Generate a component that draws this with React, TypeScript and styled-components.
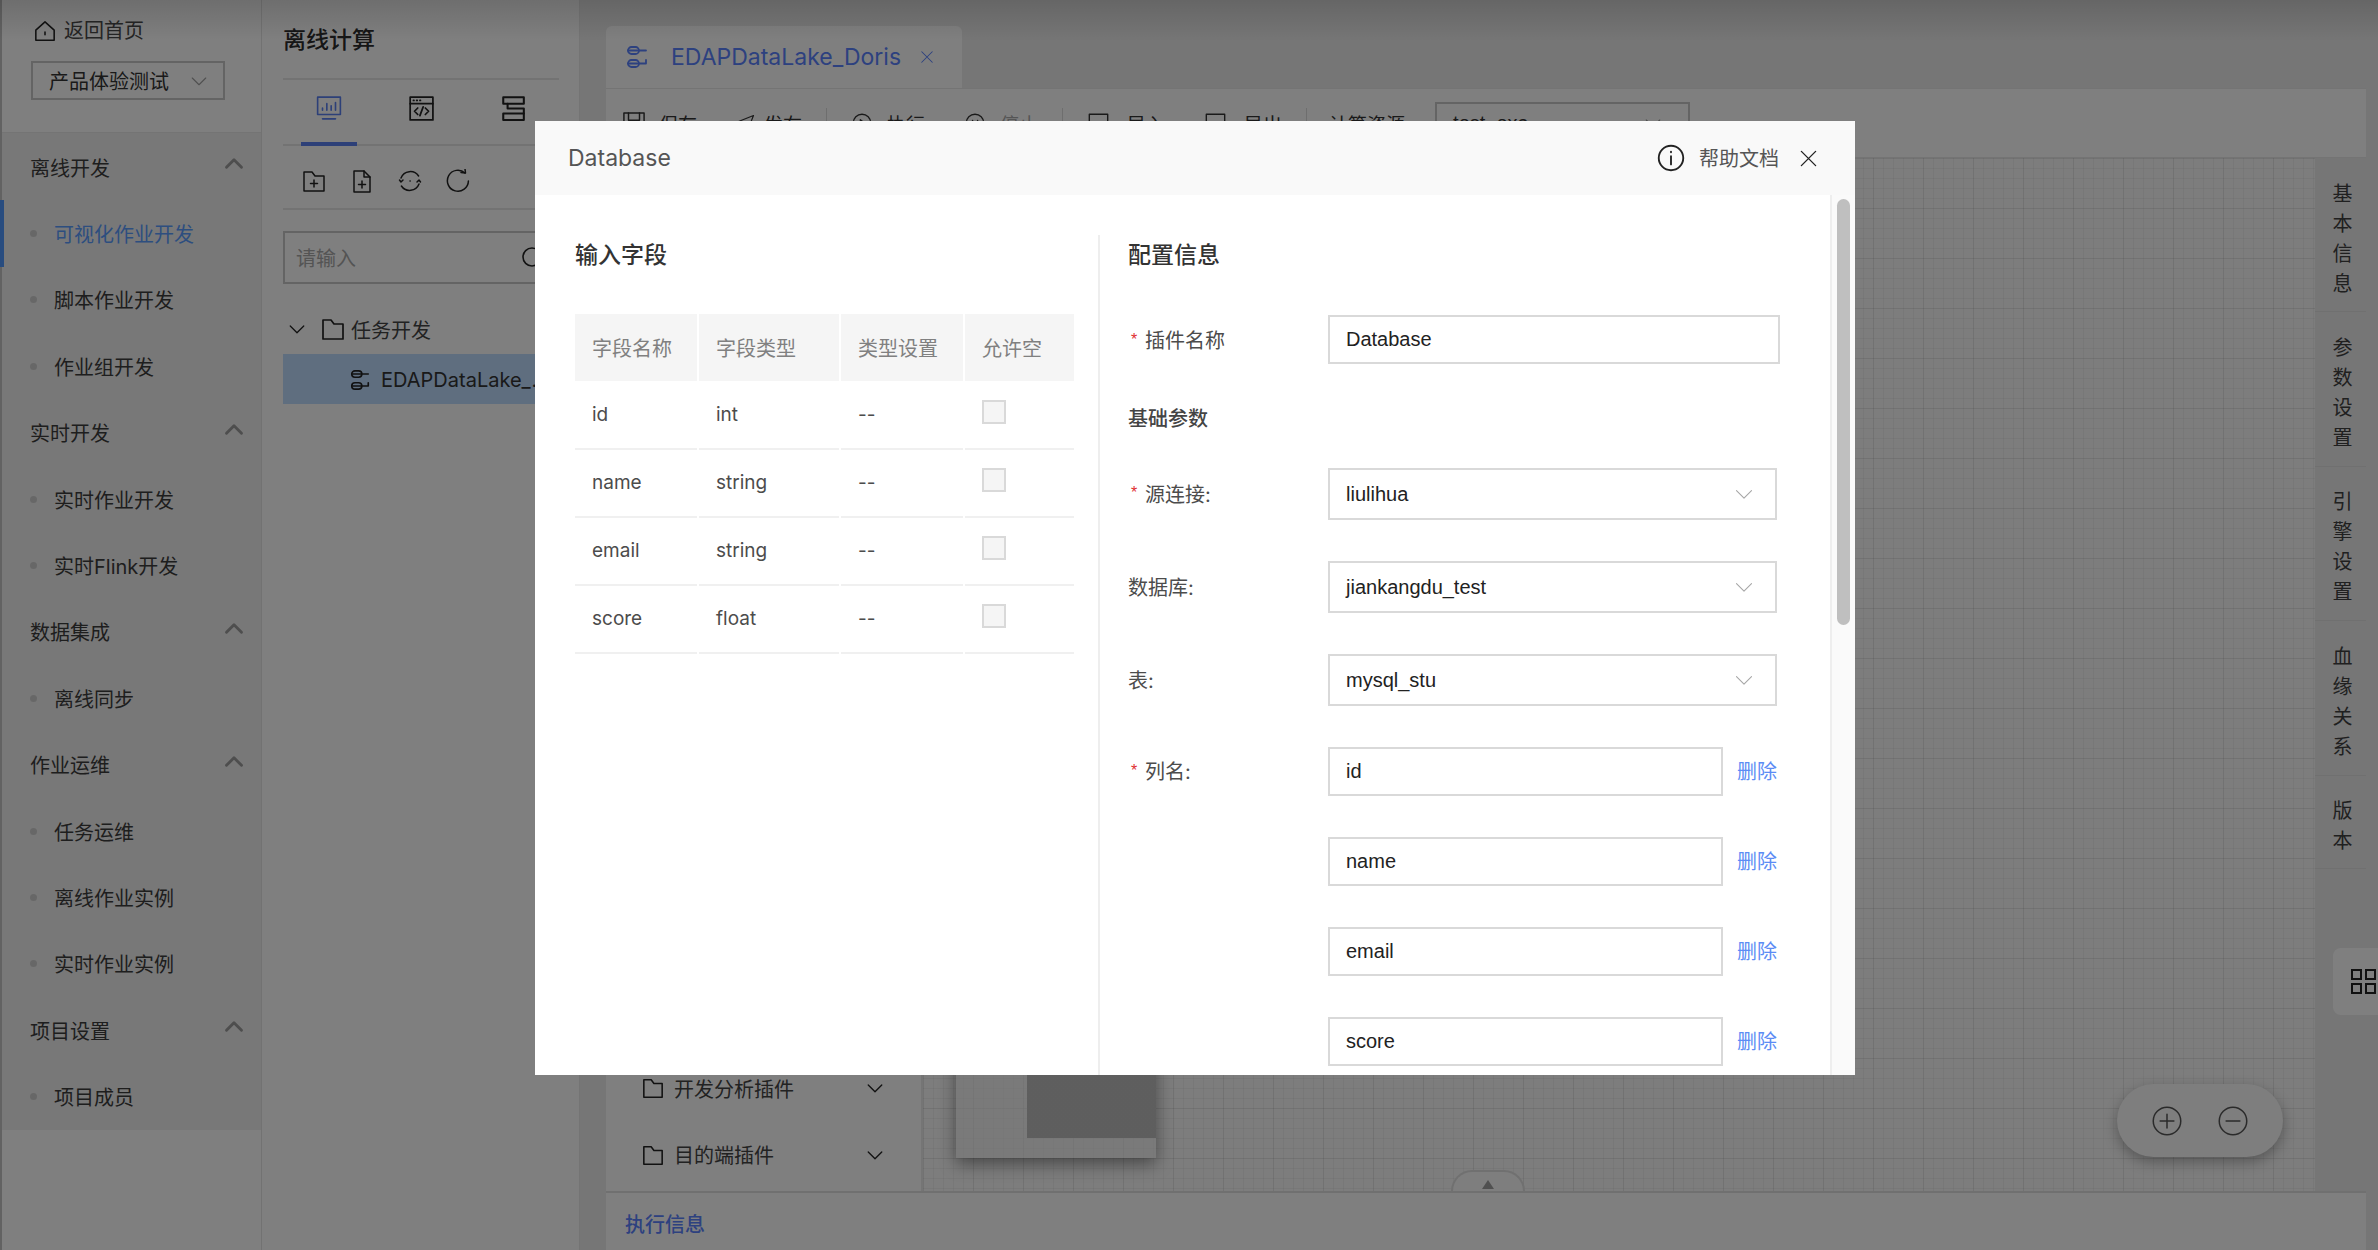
import React from "react";
import styled, { createGlobalStyle } from "styled-components";

const cjk = `"Noto Sans CJK SC", sans-serif`;

const Global = createGlobalStyle`
  html, body { margin: 0; padding: 0; width: 2378px; height: 1250px; overflow: hidden; background: #fff; }
  * { box-sizing: border-box; }
  body { font-family: Inter, ${cjk}; font-size: 20px; color: #505050; }
`;

const Page = styled.div`
  position: relative;
  display: flex;
  width: 2378px;
  height: 1250px;
  overflow: hidden;
`;

/* ---------- sidebar ---------- */
const Sidebar = styled.aside`
  width: 262px;
  flex: none;
  display: flex;
  flex-direction: column;
  background: #fff;
  border-left: 2px solid #c4c4c4;
  border-right: 1px solid #e4e4e4;
`;
const SideHeader = styled.div`
  height: 133px;
  flex: none;
  padding: 20px 0 0 29px;
  border-bottom: 1px solid #e8e8e8;
`;
const HomeLink = styled.div`
  display: flex;
  align-items: center;
  gap: 8px;
  height: 22px;
  padding-left: 3px;
  font-size: 20px;
  line-height: 22px;
  color: #4a4a4a;
  svg { color: #222; }
`;
const ProjectSelect = styled.div`
  display: flex;
  align-items: center;
  justify-content: space-between;
  width: 194px;
  height: 39px;
  margin-top: 19px;
  padding: 0 15px 0 16px;
  border: 2px solid #c8c8c8;
  color: #333;
  svg { color: #a0a0a0; }
`;
const Menu = styled.nav`
  background: #f0f0f0;
  padding-top: 1px;
`;
const GroupRow = styled.div`
  display: flex;
  align-items: center;
  justify-content: space-between;
  height: 66.4px;
  padding: 0 17px 0 28px;
  color: #3c3c3c;
  svg { color: #9c9c9c; margin-top: -6px; }
`;
const ItemRow = styled.div<{ $active?: boolean }>`
  display: flex;
  align-items: center;
  gap: 17px;
  height: 66.4px;
  margin-left: -2px;
  padding-left: 30px;
  color: ${(p) => (p.$active ? "#5a9cff" : "#3c3c3c")};
  box-shadow: ${(p) => (p.$active ? "inset 4px 0 0 #5098ff" : "none")};
`;
const Dot = styled.i`
  width: 7px;
  height: 7px;
  border-radius: 50%;
  background: #cfcfcf;
`;

/* ---------- explorer panel ---------- */
const Explorer = styled.section`
  width: 318px;
  flex: none;
  padding: 0 20px 0 21px;
  background: #fff;
  border-right: 1px solid #e8e8e8;
`;
const ExplorerTitle = styled.h1`
  height: 80px;
  margin: 0;
  padding-top: 22px;
  border-bottom: 2px solid #e6e6e6;
  font-size: 23px;
  line-height: 36px;
  font-weight: 500;
  color: #2c2c2c;
`;
const ExplorerTabs = styled.div`
  display: grid;
  grid-template-columns: repeat(3, 92px);
  height: 66px;
  border-bottom: 2px solid #e6e6e6;
`;
const ExplorerTab = styled.div<{ $active?: boolean }>`
  justify-self: center;
  display: flex;
  align-items: center;
  justify-content: center;
  width: 56px;
  height: 66px;
  padding-bottom: 6px;
  border-bottom: 4px solid ${(p) => (p.$active ? "#5a80f0" : "transparent")};
  color: ${(p) => (p.$active ? "#5a80f0" : "#222")};
`;
const ExplorerTools = styled.div`
  display: flex;
  align-items: center;
  gap: 24px;
  height: 64px;
  padding: 7px 0 0 19px;
  border-bottom: 2px solid #e6e6e6;
  color: #222;
`;
const SearchBox = styled.div`
  display: flex;
  align-items: center;
  justify-content: space-between;
  height: 53px;
  margin-top: 21px;
  padding: 0 12px 0 11px;
  border: 2px solid #c8c8c8;
  color: #a8a8a8;
  svg { color: #222; }
`;
const TreeRow = styled.div`
  display: flex;
  align-items: center;
  height: 50px;
  margin-top: 20px;
  padding-left: 5px;
  color: #444;
  svg { color: #222; flex: none; }
`;
const TreeChevron = styled.span`
  display: flex;
  margin-right: 15px;
`;
const TreeLabel = styled.span`
  margin-left: 6px;
`;
const TreeSelected = styled.div`
  display: flex;
  align-items: center;
  gap: 10px;
  height: 50px;
  padding: 2px 0 0 66px;
  background: #bedcff;
  color: #333;
  svg { color: #222; flex: none; }
`;
const TreeSelectedLabel = styled.span`
  width: 170px;
  overflow: hidden;
  white-space: nowrap;
  text-overflow: ellipsis;
`;

/* ---------- main ---------- */
const Main = styled.main`
  position: relative;
  flex: 1;
  min-width: 0;
  display: flex;
  flex-direction: column;
  padding: 26px 12px 0 26px;
  background: #ececec;
`;
const TabBar = styled.div`
  height: 62px;
  flex: none;
`;
const OpenTab = styled.div`
  display: flex;
  align-items: center;
  width: 356px;
  height: 62px;
  padding: 0 28px 0 19px;
  border-radius: 6px 6px 0 0;
  background: #fff;
  color: #5a82ff;
  font-size: 23px;
`;
const OpenTabLabel = styled.span`
  margin-left: 22px;
  flex: 1;
`;
const Toolbar = styled.div`
  display: flex;
  align-items: center;
  height: 70px;
  flex: none;
  padding-left: 17px;
  background: #fff;
  border-top: 1px solid #e8e8e8;
  border-bottom: 1px solid #e8e8e8;
  font-size: 19px;
`;
const Tool = styled.div<{ $muted?: boolean; $gap?: number }>`
  display: flex;
  align-items: center;
  gap: ${(p) => p.$gap ?? 15}px;
  margin-right: 40px;
  color: ${(p) => (p.$muted ? "#aaa" : "#333")};
  svg { color: #333; flex: none; }
`;
const ToolDivider = styled.i`
  width: 1px;
  height: 30px;
  margin: 0 25px 0 -16px;
  background: #ddd;
`;
const ResourceLabel = styled.span`
  width: 106px;
  margin-left: -3px;
  color: #333;
`;
const ResourceSelect = styled.div`
  display: flex;
  align-items: center;
  justify-content: space-between;
  width: 255px;
  height: 42px;
  padding: 0 26px 0 16px;
  border: 2px solid #c8c8c8;
  color: #333;
  font-family: "Liberation Sans", sans-serif;
  font-size: 20px;
  svg { color: #999; }
`;
const Work = styled.div`
  flex: 1;
  min-height: 0;
  display: flex;
`;
const PluginPanel = styled.div`
  width: 317px;
  flex: none;
  display: flex;
  flex-direction: column;
  justify-content: flex-end;
  padding: 0 37px 3px 36px;
  background: #fff;
  border-right: 2px solid #eaeaea;
`;
const PluginRow = styled.div`
  display: flex;
  align-items: center;
  height: 66.5px;
  gap: 10px;
  color: #444;
  svg { color: #222; flex: none; }
`;
const PluginName = styled.span`
  flex: 1;
`;
const Canvas = styled.div`
  position: relative;
  flex: 1;
  min-width: 0;
  background-color: #fafafa;
  background-image:
    linear-gradient(rgba(0, 0, 0, 0.05) 1px, transparent 1px),
    linear-gradient(90deg, rgba(0, 0, 0, 0.05) 1px, transparent 1px),
    linear-gradient(rgba(0, 0, 0, 0.04) 1px, transparent 1px),
    linear-gradient(90deg, rgba(0, 0, 0, 0.04) 1px, transparent 1px);
  background-size: 50px 50px, 50px 50px, 10px 10px, 10px 10px;
`;
const NodeCard = styled.div`
  position: absolute;
  left: 33px;
  bottom: 33px;
  width: 200px;
  height: 180px;
  padding: 0 0 20px 71px;
  background: rgba(240, 240, 240, 0.6);
  box-shadow: 0 6px 16px rgba(0, 0, 0, 0.42);
`;
const NodeThumb = styled.div`
  height: 100%;
  background: #bdbdbd;
`;
const ZoomPill = styled.div`
  position: absolute;
  right: 32px;
  bottom: 34px;
  display: flex;
  align-items: center;
  justify-content: center;
  gap: 36px;
  width: 166px;
  height: 73px;
  border-radius: 37px;
  background: #fcfcfc;
  box-shadow: 0 5px 14px rgba(0, 0, 0, 0.3);
  color: #555;
`;
const CollapseTab = styled.div`
  position: absolute;
  left: 528px;
  bottom: 0;
  display: flex;
  justify-content: center;
  padding-top: 8px;
  width: 74px;
  height: 21px;
  border: 2px solid #e0e0e0;
  border-bottom: 0;
  border-radius: 22px 22px 0 0;
  background: #fcfcfc;
`;
const Triangle = styled.i`
  width: 0;
  height: 0;
  border-left: 6.5px solid transparent;
  border-right: 6.5px solid transparent;
  border-bottom: 9px solid #a0a0a0;
`;
const Rail = styled.div`
  width: 51px;
  flex: none;
  background: #ececec;
`;
const RailItem = styled.div<{ $height: number }>`
  display: flex;
  justify-content: center;
  height: ${(p) => p.$height}px;
  padding-top: 16px;
  border-bottom: 1px solid #e0e0e0;
  writing-mode: vertical-rl;
  letter-spacing: 10px;
  line-height: 51px;
  color: #404040;
`;
const GridButton = styled.div`
  position: absolute;
  right: 0;
  top: 948px;
  display: flex;
  align-items: center;
  justify-content: flex-end;
  width: 45px;
  height: 67px;
  padding-right: 2px;
  border-radius: 8px 0 0 8px;
  background: #fff;
  color: #222;
`;
const BottomBar = styled.div`
  height: 59px;
  flex: none;
  padding: 17px 0 0 19px;
  background: #fff;
  border-top: 2px solid #e0e0e0;
  color: #5a82ff;
  font-weight: 500;
  line-height: 30px;
`;

/* ---------- overlay & modal ---------- */
const Mask = styled.div`
  position: absolute;
  inset: 0;
  background: linear-gradient(rgba(0, 0, 0, 0.57), rgba(0, 0, 0, 0.5) 40px);
`;
const Modal = styled.div`
  position: absolute;
  left: 535px;
  top: 121px;
  width: 1320px;
  height: 954px;
  display: flex;
  flex-direction: column;
  background: #fff;
  overflow: hidden;
`;
const ModalHeader = styled.header`
  display: flex;
  align-items: center;
  height: 74px;
  flex: none;
  padding: 0 37px 0 33px;
  background: #f9f9f9;
`;
const ModalTitle = styled.h2`
  flex: 1;
  margin: 0;
  font-size: 23px;
  font-weight: 400;
  color: #555;
`;
const HelpIcon = styled.span`
  display: flex;
  margin-right: 14px;
  color: #222;
`;
const HelpText = styled.span`
  margin: -2px 20px 0 0;
  color: #555;
`;
const CloseButton = styled.span`
  display: flex;
  color: #222;
`;
const ModalBody = styled.div`
  flex: 1;
  min-height: 0;
  display: flex;
`;
const FieldsColumn = styled.div`
  width: 565px;
  flex: none;
  margin-top: 40px;
  padding: 5px 0 0 40px;
  border-right: 2px solid #eee;
`;
const SectionTitle = styled.h3<{ $gap: number }>`
  height: 30px;
  margin: 0 0 ${(p) => p.$gap}px;
  font-size: 23px;
  line-height: 30px;
  font-weight: 500;
  color: #333;
`;
const FieldGrid = styled.div`
  display: grid;
  grid-template-columns: 122px 140px 122px 109px;
  column-gap: 2px;
  grid-auto-rows: 68px;
  font-family: Inter, ${cjk};
`;
const HeadCell = styled.div`
  display: flex;
  align-items: center;
  height: 67px;
  padding-left: 17px;
  background: #f5f5f5;
  color: #808080;
`;
const BodyCell = styled.div`
  display: flex;
  align-items: center;
  padding: 0 0 0 17px;
  margin-top: -1px;
  border-bottom: 2px solid #f0f0f0;
  color: #4c4c4c;
  font-size: 19px;
`;
const Check = styled.i`
  width: 24px;
  height: 24px;
  margin-top: -6px;
  background: #f5f5f5;
  border: 2px solid #d9d9d9;
`;
const ConfigColumn = styled.div`
  flex: 1;
  min-width: 0;
  padding: 45px 0 0 28px;
  overflow: hidden;
`;
const Form = styled.div`
  display: flex;
  flex-direction: column;
  gap: 41px;
`;
const FormRow = styled.div`
  display: flex;
  align-items: center;
`;
const FormLabel = styled.label<{ $lift?: boolean }>`
  display: flex;
  align-items: center;
  width: 200px;
  flex: none;
  padding-bottom: ${(p) => (p.$lift ? 2 : 0)}px;
  color: #4c4c4c;
`;
const Star = styled.span`
  width: 17px;
  padding-left: 3px;
  color: #e03030;
  font-size: 16px;
  font-family: "Liberation Sans", sans-serif;
`;
const SubHeading = styled.h4`
  height: 22px;
  margin: 0;
  font-size: 20px;
  line-height: 28px;
  font-weight: 500;
  color: #444;
`;
const TextBox = styled.div<{ $width: number }>`
  display: flex;
  align-items: center;
  width: ${(p) => p.$width}px;
  height: 49px;
  padding-left: 16px;
  border: 2px solid #d9d9d9;
  color: #222;
  font-family: "Liberation Sans", sans-serif;
`;
const SelectBox = styled.div`
  display: flex;
  align-items: center;
  justify-content: space-between;
  width: 449px;
  height: 52px;
  padding: 0 21px 0 16px;
  border: 2px solid #d9d9d9;
  color: #222;
  font-family: "Liberation Sans", sans-serif;
  svg { color: #a6a6a6; }
`;
const DeleteLink = styled.a`
  margin: -2px 0 0 14px;
  color: #5b8cf5;
  font-size: 20px;
`;
const ScrollTrack = styled.div`
  width: 25px;
  flex: none;
  padding: 4px 0 0 5px;
  background: #fafafa;
  border-left: 2px solid #eee;
`;
const ScrollThumb = styled.div`
  width: 13px;
  height: 426px;
  border-radius: 7px;
  background: #bfbfbf;
`;

/* ---------- icons ---------- */
type IconProps = { size?: number; sw?: number };
const Svg = ({ size = 24, sw = 1.6, children }: IconProps & { children: React.ReactNode }) => (
  <svg width={size} height={size} viewBox="0 0 24 24" fill="none" stroke="currentColor" strokeWidth={sw} strokeLinecap="round" strokeLinejoin="round">
    {children}
  </svg>
);
const Chevron = ({ size = 20, up, sw = 1.5 }: IconProps & { up?: boolean }) => (
  <Svg size={size} sw={sw}>
    <path d={up ? "M3 16 12 7l9 9" : "M3 8l9 9 9-9"} />
  </Svg>
);
const HomeIcon = () => (
  <Svg size={22} sw={1.7}>
    <path d="M2 11 12 2l10 9v11H2z" />
    <path d="M12 13v3" />
  </Svg>
);
const ChartIcon = () => (
  <Svg size={26} sw={1.5}>
    <rect x="1.5" y="2" width="21" height="16" />
    <path d="M6 22h12M6 14v-2M10 14V8M14 14v-4M18 14V7" />
  </Svg>
);
const CodeIcon = () => (
  <Svg size={26} sw={1.6}>
    <rect x="2" y="2" width="21" height="21" />
    <path d="M2 8h21M5 5h.5M8 5h.5M11 5h.5M9 12l-3 3 3 3M16 12l3 3-3 3M14 11l-3 8" />
  </Svg>
);
const StackIcon = () => (
  <Svg size={26} sw={1.9}>
    <rect x="3" y="2" width="19" height="6" />
    <rect x="3" y="17" width="19" height="6" />
    <path d="M7 8v4.5h15V17" />
  </Svg>
);
const FolderPlusIcon = () => (
  <Svg size={24} sw={1.5}>
    <path d="M2 3h8l3 4h9v15H2z" />
    <path d="M12 11v7M8.5 14.5h7" />
  </Svg>
);
const FilePlusIcon = () => (
  <Svg size={24} sw={1.5}>
    <path d="M4 2h10l6 6v15H4z" />
    <path d="M14 2v6h6M12 12v7M8.5 15.5h7" />
  </Svg>
);
const SyncIcon = () => (
  <Svg size={24} sw={1.5}>
    <path d="M3 9a10 10 0 0 1 17.6-2M21 15A10 10 0 0 1 3.4 17" />
    <path d="M1.5 11 3 13l2-2M22.5 13 21 11l-2 2M12 12h.2" />
  </Svg>
);
const ReloadIcon = () => (
  <Svg size={24} sw={1.5}>
    <path d="M19 4a10.5 10.5 0 1 0 3.4 8" />
    <path d="M15 3.5 19.5 4 19 0" />
  </Svg>
);
const FolderIcon = ({ size = 24 }: IconProps) => (
  <Svg size={size} sw={1.7}>
    <path d="M2 3h8l3 4h9v15H2z" />
  </Svg>
);
const SearchIcon = () => (
  <Svg size={24} sw={1.6}>
    <circle cx="11" cy="11" r="9" />
    <path d="m18 18 4 4" />
  </Svg>
);
const FlowIcon = ({ size = 22 }: IconProps) => (
  <Svg size={size} sw={1.8}>
    <rect x="3" y="2" width="11" height="7" rx="3.5" />
    <rect x="3" y="15" width="11" height="7" rx="3.5" />
    <path d="M3 5.5h11M3 18.5h11M14 5.5h7M21 15v3.5h-7" />
  </Svg>
);
const InfoIcon = () => (
  <Svg size={28} sw={1.6}>
    <circle cx="12" cy="12" r="10.5" />
    <path d="M12 10.5v7M12 6.5v.6" />
  </Svg>
);
const CloseIcon = ({ size = 20, sw = 1.7 }: IconProps) => (
  <Svg size={size} sw={sw}>
    <path d="M3 3l18 18M21 3 3 21" />
  </Svg>
);
const SaveIcon = () => (
  <Svg size={22}>
    <rect x="1" y="1" width="22" height="22" />
    <path d="M6 1v8h12V1" />
  </Svg>
);
const SendIcon = () => (
  <Svg size={18}>
    <path d="M22 2 2 10l8 4 4 8z" />
  </Svg>
);
const PlayIcon = () => (
  <Svg size={20}>
    <circle cx="12" cy="12" r="10.5" />
    <path d="M10 8l5 4-5 4z" />
  </Svg>
);
const StopIcon = () => (
  <Svg size={20}>
    <circle cx="12" cy="12" r="10.5" />
    <path d="M9 9h.2M15 9h.2M8 15h8" />
  </Svg>
);
const BoxIcon = () => (
  <Svg size={21}>
    <rect x="1.5" y="1.5" width="21" height="21" />
  </Svg>
);
const PlusCircle = () => (
  <Svg size={30} sw={1.2}>
    <circle cx="12" cy="12" r="11" />
    <path d="M12 6.5v11M6.5 12h11" />
  </Svg>
);
const MinusCircle = () => (
  <Svg size={30} sw={1.2}>
    <circle cx="12" cy="12" r="11" />
    <path d="M6.5 12h11" />
  </Svg>
);
const GridIcon = () => (
  <svg width="25" height="25" viewBox="0 0 25 25" fill="none" stroke="currentColor" strokeWidth="2">
    <rect x="1" y="1" width="9" height="9" />
    <rect x="15" y="1" width="9" height="9" />
    <rect x="1" y="15" width="9" height="9" />
    <rect x="15" y="15" width="9" height="9" />
  </svg>
);

/* ---------- data ---------- */
const menu = [
  { title: "离线开发", items: ["可视化作业开发", "脚本作业开发", "作业组开发"] },
  { title: "实时开发", items: ["实时作业开发", "实时Flink开发"] },
  { title: "数据集成", items: ["离线同步"] },
  { title: "作业运维", items: ["任务运维", "离线作业实例", "实时作业实例"] },
  { title: "项目设置", items: ["项目成员"] },
];
const fields = [
  ["id", "int"],
  ["name", "string"],
  ["email", "string"],
  ["score", "float"],
];
const rail = [
  { text: "基本信息", h: 154 },
  { text: "参数设置", h: 154.5 },
  { text: "引擎设置", h: 154.5 },
  { text: "血缘关系", h: 155 },
  { text: "版本", h: 93 },
];
const selects = [
  { label: "源连接:", value: "liulihua", required: true },
  { label: "数据库:", value: "jiankangdu_test" },
  { label: "表:", value: "mysql_stu" },
];

export default function App() {
  return (
    <Page>
      <Global />
      <Sidebar>
        <SideHeader>
          <HomeLink>
            <HomeIcon />
            返回首页
          </HomeLink>
          <ProjectSelect>
            产品体验测试
            <Chevron size={18} />
          </ProjectSelect>
        </SideHeader>
        <Menu>
          {menu.map((g) => (
            <React.Fragment key={g.title}>
              <GroupRow>
                {g.title}
                <Chevron up size={20} sw={3.4} />
              </GroupRow>
              {g.items.map((it) => (
                <ItemRow key={it} $active={it === "可视化作业开发"}>
                  <Dot />
                  {it}
                </ItemRow>
              ))}
            </React.Fragment>
          ))}
        </Menu>
      </Sidebar>

      <Explorer>
        <ExplorerTitle>离线计算</ExplorerTitle>
        <ExplorerTabs>
          <ExplorerTab $active>
            <ChartIcon />
          </ExplorerTab>
          <ExplorerTab>
            <CodeIcon />
          </ExplorerTab>
          <ExplorerTab>
            <StackIcon />
          </ExplorerTab>
        </ExplorerTabs>
        <ExplorerTools>
          <FolderPlusIcon />
          <FilePlusIcon />
          <SyncIcon />
          <ReloadIcon />
        </ExplorerTools>
        <SearchBox>
          请输入
          <SearchIcon />
        </SearchBox>
        <TreeRow>
          <TreeChevron>
            <Chevron size={18} sw={1.7} />
          </TreeChevron>
          <FolderIcon />
          <TreeLabel>任务开发</TreeLabel>
        </TreeRow>
        <TreeSelected>
          <FlowIcon />
          <TreeSelectedLabel>EDAPDataLake_Doris</TreeSelectedLabel>
        </TreeSelected>
      </Explorer>

      <Main>
        <TabBar>
          <OpenTab>
            <FlowIcon size={24} />
            <OpenTabLabel>EDAPDataLake_Doris</OpenTabLabel>
            <CloseIcon size={14} sw={1.8} />
          </OpenTab>
        </TabBar>
        <Toolbar>
          <Tool $gap={14}>
            <SaveIcon />
            保存
          </Tool>
          <Tool $gap={9}>
            <SendIcon />
            发布
          </Tool>
          <ToolDivider />
          <Tool>
            <PlayIcon />
            执行
          </Tool>
          <Tool $muted>
            <StopIcon />
            停止
          </Tool>
          <ToolDivider />
          <Tool $gap={18}>
            <BoxIcon />
            导入
          </Tool>
          <Tool $gap={18}>
            <BoxIcon />
            导出
          </Tool>
          <ToolDivider />
          <ResourceLabel>计算资源:</ResourceLabel>
          <ResourceSelect>
            test_exa
            <Chevron size={18} />
          </ResourceSelect>
        </Toolbar>
        <Work>
          <PluginPanel>
            <PluginRow>
              <FolderIcon size={22} />
              <PluginName>开发分析插件</PluginName>
              <Chevron size={18} sw={1.8} />
            </PluginRow>
            <PluginRow>
              <FolderIcon size={22} />
              <PluginName>目的端插件</PluginName>
              <Chevron size={18} sw={1.8} />
            </PluginRow>
          </PluginPanel>
          <Canvas>
            <NodeCard>
              <NodeThumb />
            </NodeCard>
            <ZoomPill>
              <PlusCircle />
              <MinusCircle />
            </ZoomPill>
            <CollapseTab>
              <Triangle />
            </CollapseTab>
          </Canvas>
          <Rail>
            {rail.map((r) => (
              <RailItem key={r.text} $height={r.h}>
                {r.text}
              </RailItem>
            ))}
          </Rail>
        </Work>
        <BottomBar>执行信息</BottomBar>
        <GridButton>
          <GridIcon />
        </GridButton>
      </Main>

      <Mask />

      <Modal>
        <ModalHeader>
          <ModalTitle>Database</ModalTitle>
          <HelpIcon>
            <InfoIcon />
          </HelpIcon>
          <HelpText>帮助文档</HelpText>
          <CloseButton>
            <CloseIcon size={19} />
          </CloseButton>
        </ModalHeader>
        <ModalBody>
          <FieldsColumn>
            <SectionTitle $gap={44}>输入字段</SectionTitle>
            <FieldGrid>
              <HeadCell>字段名称</HeadCell>
              <HeadCell>字段类型</HeadCell>
              <HeadCell>类型设置</HeadCell>
              <HeadCell>允许空</HeadCell>
              {fields.map(([n, t]) => (
                <React.Fragment key={n}>
                  <BodyCell>{n}</BodyCell>
                  <BodyCell>{t}</BodyCell>
                  <BodyCell>--</BodyCell>
                  <BodyCell>
                    <Check />
                  </BodyCell>
                </React.Fragment>
              ))}
            </FieldGrid>
          </FieldsColumn>
          <ConfigColumn>
            <SectionTitle $gap={45}>配置信息</SectionTitle>
            <Form>
              <FormRow>
                <FormLabel>
                  <Star>*</Star>插件名称
                </FormLabel>
                <TextBox $width={452}>Database</TextBox>
              </FormRow>
              <SubHeading>基础参数</SubHeading>
              {selects.map((s) => (
                <FormRow key={s.label}>
                  <FormLabel $lift>
                    {s.required && <Star>*</Star>}
                    {s.label}
                  </FormLabel>
                  <SelectBox>
                    {s.value}
                    <Chevron size={20} sw={1.3} />
                  </SelectBox>
                </FormRow>
              ))}
              {fields.map(([n], i) => (
                <FormRow key={n}>
                  <FormLabel $lift>
                    {i === 0 && (
                      <>
                        <Star>*</Star>列名:
                      </>
                    )}
                  </FormLabel>
                  <TextBox $width={395}>{n}</TextBox>
                  <DeleteLink>删除</DeleteLink>
                </FormRow>
              ))}
            </Form>
          </ConfigColumn>
          <ScrollTrack>
            <ScrollThumb />
          </ScrollTrack>
        </ModalBody>
      </Modal>
    </Page>
  );
}
